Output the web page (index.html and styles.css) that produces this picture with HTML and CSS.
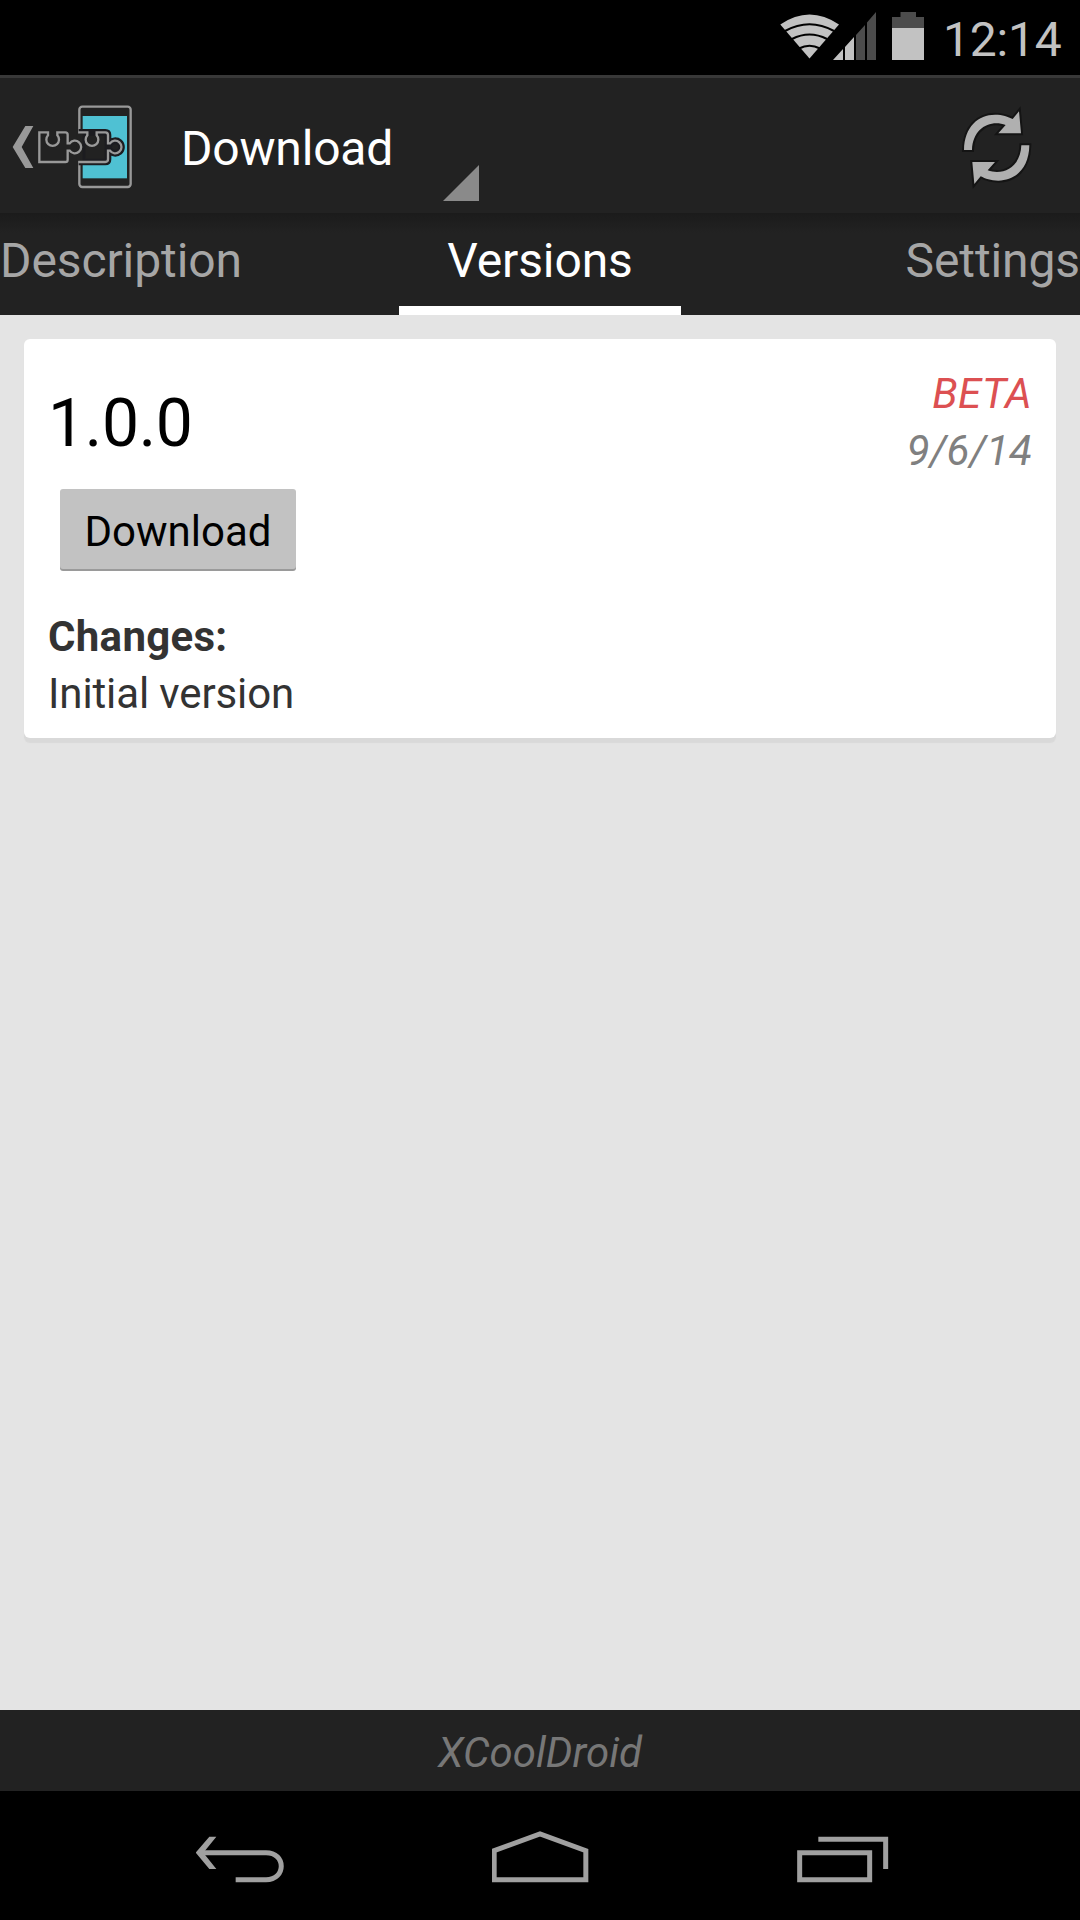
FILE: index.html
```html
<!DOCTYPE html>
<html lang="en">
<head>
  <meta charset="UTF-8">
  <meta name="viewport" content="width=device-width, initial-scale=1.0">
  <title>Download</title>
  <link rel="stylesheet" href="styles.css">
</head>
<body>
  <div class="status-bar">
    <svg class="status-icons" viewBox="780 0 144 75">
      <path fill="#c2c2c2" d="M780.3 24.5 Q809.5 4.500 839 24.500 L809.500 58.500 Z"/>
      <g fill="none" stroke="#000" stroke-width="2">
        <path d="M785 31 Q809.500 17.500 834 31"/>
        <path d="M792 39 Q809.500 30 827 39"/>
        <path d="M799 48.500 Q809.500 43 820 48.500"/>
      </g>
      <path fill="#c2c2c2" d="M833 60 L843 49 V60 Z M845 47 L854 37 V60 H845 Z"/>
      <path fill="#4c4c4c" d="M856 35 L865 25 V60 H856 Z M867 22.500 L876 12 V60 H867 Z"/>
      <path fill="#4c4c4c" d="M900.500 12 H916 V17 H924 V28 H892 V17 H900.500 Z"/>
      <rect fill="#c2c2c2" x="892" y="28" width="32" height="32"/>
    </svg>
    <span class="clock">12:14</span>
  </div>

  <div class="action-bar">
    <svg class="app-logo" viewBox="0 -36 480 405">
      <path fill="#999" d="M76 108 H100 L65 171 L100 234 H76 L38 171 Z"/>
      <rect x="238" y="50" width="154" height="241" rx="9" fill="#222" stroke="#999" stroke-width="7"/>
      <rect x="248" y="78" width="133" height="187" fill="#4fc1d3"/>
      <!-- dark gap around the puzzle piece -->
      <path fill="#222" stroke="#1c1c20" stroke-width="20" d="M246 127 H316 Q324 127 324 135 V160 H330 A19 19 0 1 1 330 182 H324 V208 Q324 216 316 216 H246 Z"/>
      <rect x="230" y="130" width="18" height="83" fill="#222"/>
      <g fill="none" stroke="#999" stroke-width="7">
        <path d="M235 127 H262 V136 A19 19 0 1 0 290 136 V127 H316 Q324 127 324 135 V160 H330 A19 19 0 1 1 330 182 H324 V208 Q324 216 316 216 H235"/>
        <path d="M118 127 H144 V136 A19 19 0 1 0 172 136 V127 H196 Q203 127 203 134 V160 H209 A19 19 0 1 1 209 182 H203 V209 Q203 216 196 216 H118 Z"/>
      </g>
    </svg>
    <div class="spinner">
      <span class="title">Download</span>
      <svg class="corner" viewBox="0 0 36 36"><path fill="#8a8a8a" d="M36 0 V36 H0 Z"/></svg>
    </div>
    <svg class="refresh" viewBox="0 -36 360 405">
      <defs>
        <g id="arrow">
          <path d="M72 180 C73 110 115 74 165 74 C188 74 204 80 218 87 L237 64 L243 130 H175 L197 105 C150 88 98 115 96 180 Z"/>
        </g>
      </defs>
      <g fill="#b0b0b0" stroke="#141414" stroke-width="12" paint-order="stroke">
        <use href="#arrow"/>
        <use href="#arrow" transform="rotate(180 170 173)"/>
      </g>
    </svg>
  </div>

  <div class="tabs">
    <span class="tab">Description</span>
    <span class="tab active">Versions</span>
    <span class="tab last">Settings</span>
  </div>

  <div class="content">
    <div class="card">
      <div class="card-header">
        <span class="version">1.0.0</span>
        <div class="release">
          <div class="beta">BETA</div>
          <div class="date">9/6/14</div>
        </div>
      </div>
      <button class="download">Download</button>
      <div class="changes">
        <b>Changes:</b>
        <div>Initial version</div>
      </div>
    </div>
  </div>

  <div class="author">XCoolDroid</div>

  <div class="nav-bar">
    <svg width="89" height="129" viewBox="78 -27 267 387">
      <path fill="none" stroke="#a0a0a0" stroke-width="15" d="M94 158 H288 C349 158 349 239 288 239 H197"/>
      <path fill="#a0a0a0" d="M77 158 L118 110 H139 L100 158 L139 207 H118 Z"/>
    </svg>
    <svg width="98" height="129" viewBox="966 -27 294 387">
      <path fill="none" stroke="#a0a0a0" stroke-width="15" d="M972.500 239 V152 L1110 102 L1247.500 152 V239 Z"/>
    </svg>
    <svg width="92" height="129" viewBox="111 -27 276 387">
      <path fill="none" stroke="#a0a0a0" stroke-width="15" d="M119 158 H329 V239 H119 Z M175 118 H377 V207"/>
    </svg>
  </div>
</body>
</html>
```

FILE: styles.css
```css
* {
  box-sizing: border-box;
}
body {
  margin: 0;
  height: 1920px;
  display: flex;
  flex-direction: column;
  overflow: hidden;
  font-family: Roboto, sans-serif;
  background: #e4e4e4;
}
svg {
  display: block;
  flex: none;
}
.status-bar {
  height: 75px;
  padding-right: 16px;
  display: flex;
  justify-content: flex-end;
  background: #000;
}
.status-icons {
  width: 144px;
  height: 75px;
}
.clock {
  width: 121px;
  margin-left: 19px;
  line-height: 79px;
  font-size: 48px;
  letter-spacing: -0.2px;
  color: #c2c2c2;
}
.action-bar {
  height: 138px;
  display: flex;
  border-top: 3px solid #383838;
  background: #222;
}
.app-logo {
  width: 160px;
  height: 135px;
}
.spinner {
  width: 298px;
  margin-left: 21px;
  display: flex;
  justify-content: space-between;
}
.title {
  line-height: 141px;
  font-size: 48px;
  letter-spacing: -0.2px;
  color: #fff;
}
.corner {
  width: 36px;
  height: 36px;
  margin-top: 87px;
}
.refresh {
  width: 120px;
  height: 135px;
  margin-left: auto;
  margin-right: 20px;
}
.tabs {
  height: 102px;
  display: grid;
  grid-template-columns: 399px 282px 399px;
  background: linear-gradient(#1b1b1b, #222 20px);
}
.tab {
  line-height: 96px;
  font-size: 48px;
  letter-spacing: -0.1px;
  color: #a6a6a6;
}
.active {
  height: 102px;
  text-align: center;
  color: #fff;
  border-bottom: 9px solid #fff;
}
.last {
  text-align: right;
}
.content {
  flex: 1;
  padding: 24px;
}
.card {
  height: 399px;
  padding: 26px 24px 16px;
  border-radius: 6px;
  background: #fff;
  box-shadow: 0 5px 1px #d9d9d9;
}
.card-header {
  height: 117px;
  display: flex;
  justify-content: space-between;
  line-height: 117px;
}
.version {
  font-size: 66px;
  letter-spacing: -0.3px;
  color: #000;
}
.release {
  line-height: 57px;
  font-size: 42px;
  font-style: italic;
  text-align: right;
}
.beta {
  letter-spacing: 0.4px;
  color: #dc5052;
}
.date {
  color: #808080;
}
.download {
  display: block;
  width: 236px;
  height: 80px;
  margin: 7px 12px 39px;
  padding: 4px 0 0;
  border: none;
  border-radius: 3px;
  font-family: inherit;
  font-size: 42px;
  color: #000;
  background: #c2c2c2;
  box-shadow: 0 2px 0 #9a9a9a;
}
.changes {
  line-height: 57px;
  font-size: 42px;
  letter-spacing: -0.12px;
  color: #333;
}
.changes b {
  letter-spacing: 0.3px;
}
.author {
  height: 81px;
  line-height: 85px;
  text-align: center;
  font-size: 42px;
  font-style: italic;
  color: #777;
  background: #222;
}
.nav-bar {
  height: 129px;
  padding: 0 191px 0 196px;
  display: flex;
  justify-content: space-between;
  background: #000;
}
```
